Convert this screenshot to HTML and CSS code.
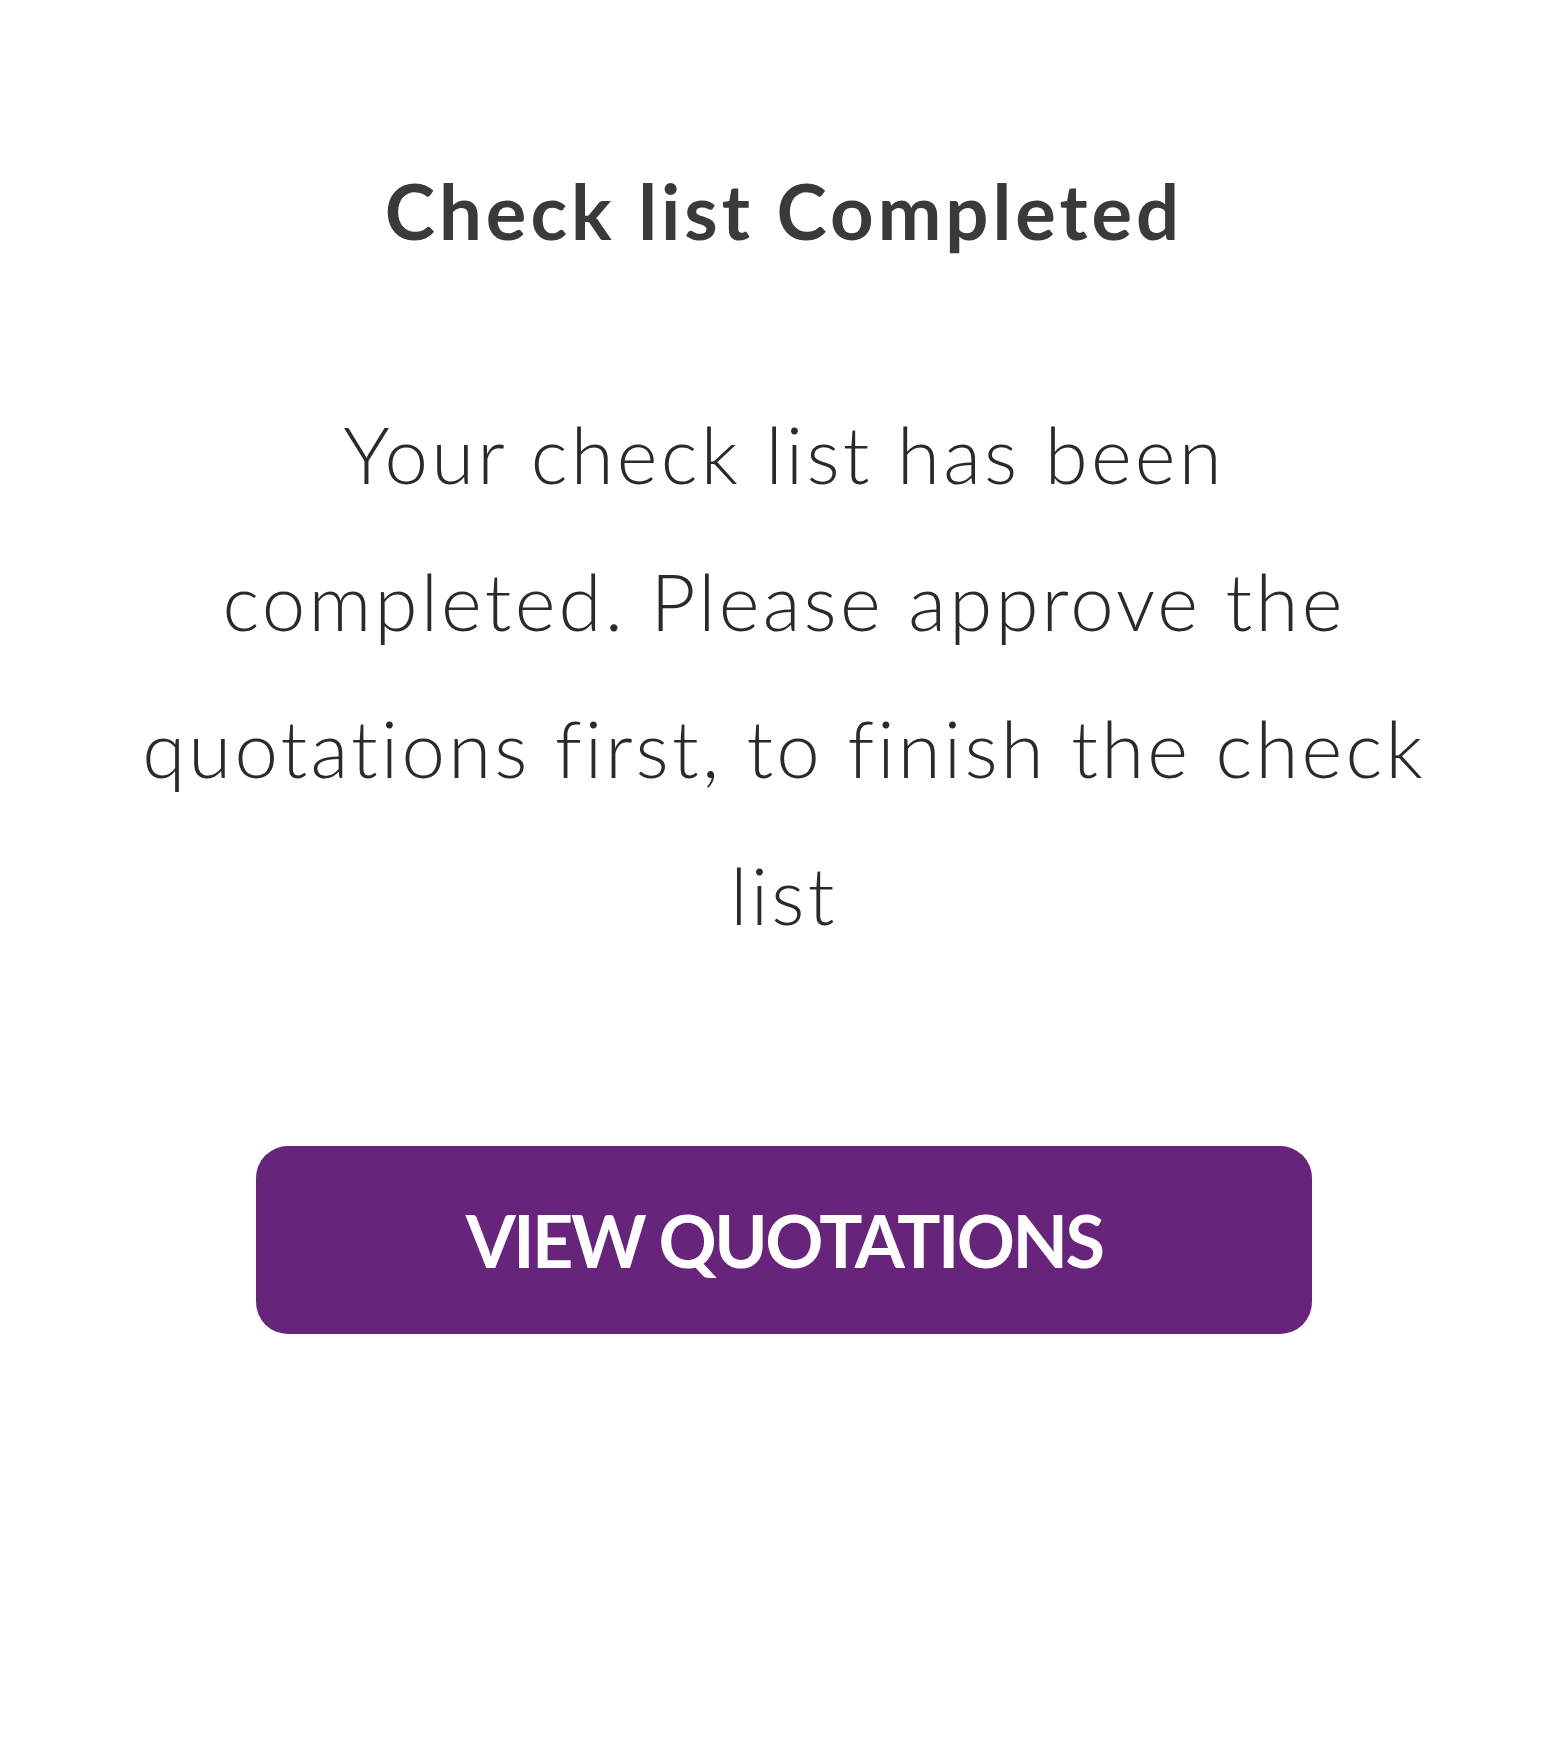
FILE: index.html
```html
<!DOCTYPE html>
<html lang="en">
<head>
    <meta charset="UTF-8">
    <meta name="viewport" content="width=device-width, initial-scale=1.0">
    <title>Check list Completed</title>
    <link rel="stylesheet" href="styles.css">
</head>
<body>

    <div class="dialog">
        <h2 class="dialog-title">Check list Completed</h2>
        <p class="dialog-text">Your check list has been completed. Please approve the quotations first, to finish the check list</p>
        <button type="button" class="dialog-btn">VIEW QUOTATIONS</button>
    </div>

</body>
</html>
```

FILE: styles.css
```css
/* Página */
body {
    margin: 0;
    background-color: #ffffff;
    font-family: Lato, "Open Sans", sans-serif;
}

.dialog {
    width: 1310px;
    margin: 0 auto;
    padding-top: 166px;
    text-align: center;
}

.dialog-title {
    margin: 0;
    font-size: 76px;
    line-height: 90px;
    font-weight: 700;
    letter-spacing: 4px;
    color: #3a3a3a;
}

.dialog-text {
    width: 1288px;
    margin: 125px auto 0 auto;
    font-size: 78px;
    line-height: 147px;
    font-weight: 300;
    letter-spacing: 3.2px;
    color: #2a2a2a;
}

.dialog-btn {
    display: block;
    width: 1056px;
    height: 188px;
    margin: 177px auto 0 auto;
    border: none;
    border-radius: 32px;
    background-color: #66247a;
    color: #ffffff;
    font-family: Lato, "Open Sans", sans-serif;
    font-size: 72px;
    font-weight: 700;
    letter-spacing: -2.5px;
    cursor: pointer;
}
```
